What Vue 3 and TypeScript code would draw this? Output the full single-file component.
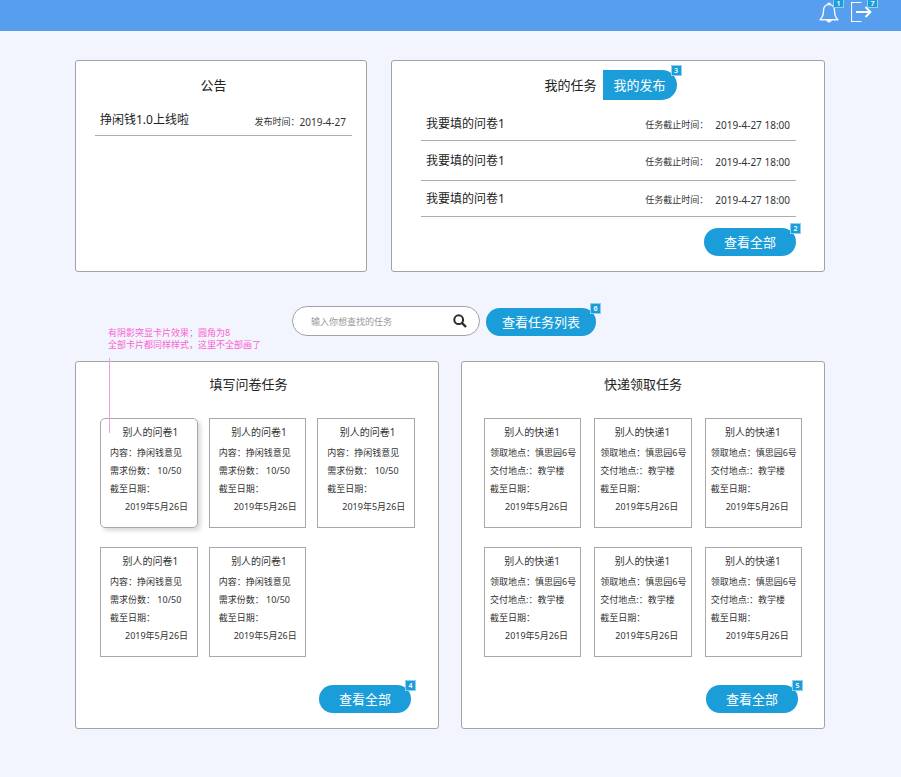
<script setup lang="ts">
import { ref } from 'vue'

interface Task {
  id: number
  title: string
  deadline: string
}

interface Card {
  id: number
  title: string
  lines: string[]
  date: string
  raised?: boolean
}

const keyword = ref('')

const tasks: Task[] = [1, 2, 3].map((id) => ({
  id,
  title: '我要填的问卷1',
  deadline: '2019-4-27 18:00',
}))

const surveys: Card[] = [1, 2, 3, 4, 5].map((id) => ({
  id,
  title: '别人的问卷1',
  lines: ['内容：挣闲钱意见', '需求份数： 10/50', '截至日期：'],
  date: '2019年5月26日',
  raised: id === 1,
}))

const parcels: Card[] = [1, 2, 3, 4, 5, 6].map((id) => ({
  id,
  title: '别人的快递1',
  lines: ['领取地点：慎思园6号', '交付地点:：教学楼', '截至日期：'],
  date: '2019年5月26日',
}))
</script>

<template>
  <div class="page">
    <header class="topbar">
      <button class="icon-btn" type="button" aria-label="通知">
        <svg width="20" height="22" viewBox="0 0 20 22" fill="none" stroke="#f4f8fe" stroke-width="1.4">
          <path d="M9 3.800V2.400h2v1.400" />
          <path d="M10 3.600C6.400 3.600 4.500 6 4.500 9.400c0 4.500-1 7-3.500 9.300h18c-2.500-2.300-3.500-4.800-3.500-9.300C15.500 6 13.600 3.600 10 3.600z" stroke-linejoin="round" />
          <path d="M7.500 19.400a2.600 2.300 0 0 0 5 0z" fill="#f4f8fe" stroke-width="1" />
        </svg>
        <span class="badge">1</span>
      </button>
      <button class="icon-btn" type="button" aria-label="退出">
        <svg width="22" height="22" viewBox="0 0 22 22" fill="none" stroke="#fff">
          <path d="M10.500 1.500h-10v19h10" stroke-width="1.200" />
          <path d="M5 11h15M14.500 6l5 5-5 5" stroke-width="1.800" />
        </svg>
        <span class="badge">7</span>
      </button>
    </header>

    <main class="content">
      <div class="overview">
        <section class="panel notice">
          <h2 class="heading">公告</h2>
          <div class="row">
            <a class="row-title" href="#">挣闲钱1.0上线啦</a>
            <span class="meta"><span>发布时间：</span><time>2019-4-27</time></span>
          </div>
        </section>

        <section class="panel mine">
          <div class="tabs">
            <button class="tab" type="button">我的任务</button>
            <button class="tab active" type="button">我的发布<span class="badge">3</span></button>
          </div>
          <ul class="tasks">
            <li v-for="task in tasks" :key="task.id" class="row">
              <a class="row-title" href="#">{{ task.title }}</a>
              <span class="meta wide"><span>任务截止时间：</span><time>{{ task.deadline }}</time></span>
            </li>
          </ul>
          <button class="pill more" type="button">查看全部<span class="badge">2</span></button>
        </section>
      </div>

      <form class="search" @submit.prevent>
        <div class="field">
          <input v-model="keyword" type="text" aria-label="查找任务" placeholder="输入你想查找的任务" />
          <button class="find" type="submit" aria-label="搜索">
            <svg width="14" height="14" viewBox="0 0 14 14" fill="none" stroke="#2b2b2b" stroke-width="2">
              <circle cx="5.700" cy="5.700" r="4.400" />
              <path d="M9 9l4 4" stroke-width="2.400" />
            </svg>
          </button>
        </div>
        <button class="pill list" type="button">查看任务列表<span class="badge">6</span></button>
      </form>

      <div class="boards">
        <section class="panel board surveys">
          <h2 class="heading">填写问卷任务</h2>
          <div class="cards">
            <article v-for="card in surveys" :key="card.id" class="card" :class="{ raised: card.raised }">
              <h3>{{ card.title }}</h3>
              <p v-for="line in card.lines" :key="line">{{ line }}</p>
              <p class="date">{{ card.date }}</p>
            </article>
          </div>
          <button class="pill more" type="button">查看全部<span class="badge">4</span></button>
          <aside class="note">有阴影突显卡片效果；圆角为8<br />全部卡片都同样样式，这里不全部画了</aside>
        </section>

        <section class="panel board parcels">
          <h2 class="heading">快递领取任务</h2>
          <div class="cards">
            <article v-for="card in parcels" :key="card.id" class="card">
              <h3>{{ card.title }}</h3>
              <p v-for="line in card.lines" :key="line">{{ line }}</p>
              <p class="date">{{ card.date }}</p>
            </article>
          </div>
          <button class="pill more" type="button">查看全部<span class="badge">5</span></button>
        </section>
      </div>
    </main>
  </div>
</template>

<style>
body {
  background: #f2f5fd;
}
</style>

<style scoped>
.page,
.page * {
  box-sizing: border-box;
}

.page {
  min-height: 100vh;
  background: #f2f5fd;
  color: #333;
  font-family: 'Noto Sans', 'Noto Sans CJK SC', sans-serif;
  font-size: 9px;
  line-height: 18px;
}

button,
input {
  margin: 0;
  padding: 0;
  border: 0;
  background: none;
  color: inherit;
  font: inherit;
}

button {
  cursor: pointer;
}

a {
  color: inherit;
  text-decoration: none;
}

h2,
h3,
p,
ul {
  margin: 0;
  padding: 0;
  font-weight: 400;
}

.topbar {
  display: flex;
  justify-content: flex-end;
  gap: 12px;
  height: 31px;
  padding: 1px 28px 0 0;
  background: #589eef;
}

.icon-btn {
  position: relative;
  height: 22px;
}

.icon-btn svg {
  display: block;
}

.badge {
  position: absolute;
  top: -5px;
  right: -5px;
  width: 11px;
  height: 11px;
  border: 1px solid #8fd0ee;
  background: #1b9dd9;
  color: #fff;
  font-size: 7px;
  font-weight: 600;
  line-height: 9px;
  text-align: center;
}

.icon-btn .badge {
  top: -1px;
  height: 8px;
  border-top: 0;
  line-height: 7px;
}

.content {
  padding: 29px 76px 48px 75px;
}

.overview {
  display: grid;
  grid-template-columns: 292fr 434fr;
  gap: 24px;
}

.panel {
  position: relative;
  border: 1px solid #a3a3a6;
  border-radius: 3px;
  background: #fff;
}

.heading {
  color: #222;
  font-size: 13px;
  line-height: 18px;
  text-align: center;
}

.row {
  display: flex;
  align-items: center;
  justify-content: space-between;
  padding: 0 6px 0 5px;
  border-bottom: 1px solid #adadad;
  white-space: nowrap;
}

.row-title {
  color: #222;
  font-size: 12px;
}

.meta {
  display: flex;
  padding-top: 3px;
}

.meta.wide {
  gap: 7px;
}

.meta time {
  font-size: 10px;
}

.notice {
  padding: 15px 14px 15px 19px;
}

.notice .heading {
  padding-right: 20px;
}

.notice .row {
  height: 31px;
  margin-top: 11px;
}

.mine {
  display: flex;
  flex-direction: column;
  padding: 9px 28px 15px 29px;
}

.tabs {
  display: flex;
  justify-content: center;
  gap: 6px;
  padding-left: 4px;
}

.tab {
  position: relative;
  height: 30px;
  color: #222;
  font-size: 13px;
}

.tab.active {
  width: 74px;
  border-radius: 0 15px 15px 0;
  background: #1b9dd9;
  color: #fff;
}

.tasks {
  display: grid;
  grid-template-rows: 34px 40px 36px;
  margin-top: 7px;
  list-style: none;
}

.pill {
  position: relative;
  height: 28px;
  border-radius: 14px;
  background: #1b9dd9;
  color: #fff;
  font-size: 13px;
}

.more {
  width: 92px;
}

.mine .more {
  align-self: flex-end;
  margin-top: 11px;
}

.search {
  display: flex;
  align-items: flex-end;
  justify-content: center;
  gap: 6px;
  margin: 34px 0 25px;
  padding-right: 12px;
}

.field {
  display: flex;
  align-items: center;
  width: 188px;
  height: 30px;
  padding: 0 12px 0 18px;
  border: 1px solid #a3a3a6;
  border-radius: 15px;
  background: #fff;
}

.field input {
  flex: 1;
  min-width: 0;
  height: 28px;
  outline: 0;
}

.field input::placeholder {
  color: #999;
  opacity: 1;
}

.find svg {
  display: block;
}

.list {
  width: 110px;
}

.boards {
  display: grid;
  grid-template-columns: 1fr 1fr;
  gap: 22px;
}

.board {
  display: flex;
  flex-direction: column;
  padding: 13px 23px 15px 24px;
}

.board .heading {
  margin-bottom: 25px;
}

.surveys .heading {
  padding-right: 18px;
}

.parcels {
  padding-left: 22px;
  padding-right: 22px;
}

.cards {
  display: grid;
  grid-template-columns: repeat(3, 1fr);
  grid-auto-rows: 110px;
  gap: 19px 11px;
}

.parcels .cards {
  column-gap: 13px;
}

.board .more {
  align-self: flex-end;
  margin: 28px 4px 0 0;
}

.card {
  padding: 4px 0 0 9px;
  border: 1px solid #a8a8a8;
  white-space: nowrap;
}

.parcels .card {
  padding-left: 5px;
}

.card h3 {
  margin-bottom: 3px;
  padding-right: 6px;
  font-size: 10px;
  text-align: center;
}

.card .date {
  padding-left: 15px;
}

.raised {
  border-radius: 5px;
  box-shadow: 3px 3px 4px rgba(0, 0, 0, 0.14);
}

.note {
  position: absolute;
  top: -35px;
  left: 32px;
  color: #fb62d3;
  line-height: 12px;
  white-space: nowrap;
}

.note::after {
  content: '';
  position: absolute;
  top: 31px;
  left: 1px;
  width: 1px;
  height: 75px;
  background: #fb9be2;
}
</style>
